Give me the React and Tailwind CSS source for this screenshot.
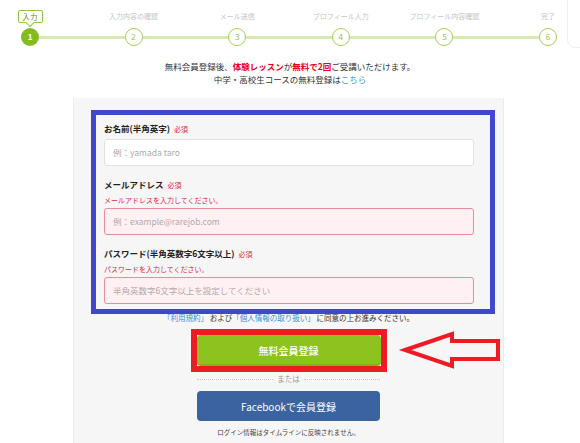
const steps = ["入力", "入力内容の確認", "メール送信", "プロフィール入力", "プロフィール内容確認", "完了"];

const font = { fontFamily: '"Noto Sans CJK JP", "Noto Sans", sans-serif' };

function Step({ label, n, active }) {
  return (
    <div className="relative flex flex-col items-center w-[18px]">
      <div className="h-[20px] flex flex-col items-center">
        {active ? (
          <div className="relative mt-[2px] h-[13px] px-[4px] border border-[#8cc63f] rounded-[2px] bg-white flex items-center">
            <span className="text-[7.5px] leading-[11px] text-[#5d8f1a] whitespace-nowrap">{label}</span>
            <div className="absolute left-1/2 -bottom-[4px] -ml-[3px] w-[6px] h-[6px] rotate-45 bg-white border-r border-b border-[#8cc63f]"></div>
          </div>
        ) : (
          <span className="mt-[3px] text-[7px] leading-[10px] text-[#c4c4c4] whitespace-nowrap">{label}</span>
        )}
      </div>
      {active ? (
        <div className="relative z-10 w-[18px] h-[18px] rounded-full bg-[#84bb1f] flex items-center justify-center text-[8px] font-bold text-white">
          {n}
        </div>
      ) : (
        <div className="relative z-10 w-[18px] h-[18px] rounded-full bg-white border-[1.5px] border-[#a3cf55] flex items-center justify-center text-[8px] text-[#8cbf3f]">
          {n}
        </div>
      )}
    </div>
  );
}

function Field({ label, error, placeholder, invalid, first }) {
  return (
    <div>
      <div className={`${first ? "" : "mt-[12px]"} leading-[12px] flex items-baseline`}>
        <span className="text-[8.5px] font-bold text-[#222]">{label}</span>
        <span className="ml-[4px] text-[7px] text-[#e8253f]">必須</span>
      </div>
      {error && <div className="mt-[4px] text-[7px] leading-[10px] text-[#e8253f]">{error}</div>}
      <div
        className={`${error ? "mt-[3px]" : "mt-[4px]"} h-[27px] rounded-[3px] border flex items-center pl-[8px] text-[8.5px] ${
          invalid ? "bg-[#fff0f3] border-[#f08a9a] text-[#b5a9ab]" : "bg-white border-[#e2e2e2] text-[#aaaaaa]"
        }`}
      >
        {placeholder}
      </div>
    </div>
  );
}

export default function App() {
  return (
    <div style={font} className="relative w-[580px] h-[443px] overflow-hidden bg-white flex flex-col">
      <div className="absolute left-[567px] -top-[10px] w-[40px] h-[58px] border border-[#efefef] rounded-lg"></div>

      {/* stepper */}
      <div className="relative h-[50px] pt-[8px] pl-[21px] pr-[23px] flex justify-between">
        <div className="absolute left-[30px] w-[518px] top-[36px] h-[3px] bg-[#d6ebb4]"></div>
        {steps.map((s, i) => (
          <Step key={s} label={s} n={i + 1} active={i === 0} />
        ))}
      </div>

      <div className="pt-[10px] text-center text-[8.5px] leading-[13px] text-[#333]">
        <p>
          無料会員登録後、<span className="font-bold text-[#e8001c]">体験レッスン</span>が
          <span className="font-bold text-[#e8001c]">無料で2回</span>ご受講いただけます。
        </p>
        <p>
          中学・高校生コースの無料登録は<span className="text-[#3a9be0]">こちら</span>
        </p>
      </div>

      {/* panel */}
      <div className="mt-[12px] ml-[73px] w-[431px] flex-1 bg-[#f6f6f6] border-x border-[#ececec] pt-[12px]">
        <div className="ml-[17px] w-[404px] border-[5px] border-[#3f48cc] pl-[8px] pr-[16px] pt-[7px] pb-[5px]">
          <Field first label="お名前(半角英字)" placeholder="例：yamada taro" />
          <Field
            label="メールアドレス"
            error="メールアドレスを入力してください。"
            placeholder="例：example@rarejob.com"
            invalid
          />
          <Field
            label="パスワード(半角英数字6文字以上)"
            error="パスワードを入力してください。"
            placeholder="半角英数字6文字以上を設定してください"
            invalid
          />
        </div>

        <p className="-mt-[1px] text-center text-[7.5px] leading-[10px] text-[#333]">
          <span className="text-[#3b8fd6]">「利用規約」</span> および<span className="text-[#3b8fd6]">「個人情報の取り扱い」</span> に同意の上お進みください。
        </p>

        <div className="mt-[6px] mx-auto w-[196px] border-[6px] border-[#ed1c24]">
          <div className="h-[31px] rounded-[4px] bg-[#8dc21f] shadow-[inset_0_-2px_0_rgba(0,0,0,0.08)] flex items-center justify-center text-[10px] font-medium text-white">
            無料会員登録
          </div>
        </div>

        <div className="mt-[2px] mx-auto w-[183px] flex items-center gap-[4px] leading-[10px]">
          <div className="flex-1 border-t border-dotted border-[#c8c8c8]"></div>
          <span className="text-[7.5px] text-[#999]">または</span>
          <div className="flex-1 border-t border-dotted border-[#c8c8c8]"></div>
        </div>

        <div className="mt-[7px] mx-auto w-[183px] h-[30px] rounded-[4px] bg-[#3a63a0] flex items-center justify-center text-[10px] text-white">
          Facebookで会員登録
        </div>

        <p className="mt-[7px] text-center text-[6.5px] leading-[9px] text-[#444]">
          ログイン情報はタイムラインに反映されません。
        </p>
      </div>

      {/* arrow annotation */}
      <svg className="absolute left-0 top-0 pointer-events-none" width="580" height="443">
        <polygon
          points="405,350 452,334 452,341 498,341 498,359 452,359 452,366"
          fill="none"
          stroke="#ed1c24"
          strokeWidth="4"
          strokeLinejoin="miter"
        />
      </svg>
    </div>
  );
}
